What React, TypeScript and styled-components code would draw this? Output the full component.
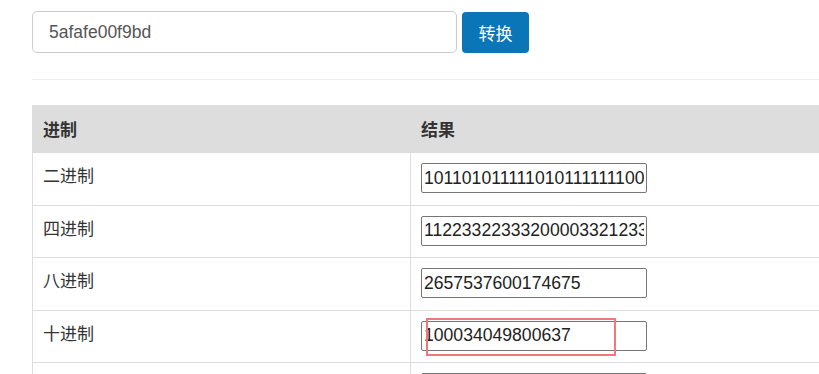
import React from "react";
import styled, { createGlobalStyle } from "styled-components";

const GlobalStyle = createGlobalStyle`
  html, body {
    margin: 0;
    padding: 0;
    background: #fff;
    overflow: hidden;
  }

  body {
    font-family: "Noto Sans CJK SC", "Liberation Sans", sans-serif;
    color: #333;
  }
`;

const Page = styled.div`
  padding: 11px 0 0 32px;
  width: 1200px;
`;

const Form = styled.form`
  display: flex;
  align-items: flex-start;
  gap: 5px;
`;

const SearchInput = styled.input`
  box-sizing: border-box;
  width: 425px;
  height: 42px;
  padding: 0 16px;
  border: 1px solid #ccc;
  border-radius: 5px;
  font-family: "Liberation Sans", Arial, sans-serif;
  font-size: 17.5px;
  color: #555;
  outline: none;
`;

const ConvertButton = styled.button`
  box-sizing: border-box;
  width: 67px;
  height: 41px;
  margin-top: 1px;
  border: none;
  border-radius: 4px;
  background: #0a75b7;
  color: #fff;
  font-family: "Noto Sans CJK SC", sans-serif;
  font-size: 17px;
  cursor: pointer;
`;

const Divider = styled.hr`
  margin: 26px 0 25px;
  border: 0;
  border-top: 1px solid #eee;
`;

const Table = styled.table`
  width: 1150px;
  border-collapse: collapse;
  font-size: 17px;
  line-height: 1.42857;
  color: #333;
`;

const NameCol = styled.col`
  width: 378px;
`;

const HeadCell = styled.th`
  padding: 11px 10px;
  text-align: left;
  font-weight: 700;
  background: #ddd;
  border: 1px solid #ddd;
`;

const Cell = styled.td`
  padding: 10px 10px 11.5px;
  vertical-align: top;
  border: 1px solid #ddd;
`;

const ValueBox = styled.div`
  position: relative;
  width: 226px;
`;

const ValueInput = styled.input`
  display: block;
  box-sizing: border-box;
  width: 226px;
  height: 30px;
  padding: 1px 2px;
  border: 1px solid #767676;
  border-radius: 2px;
  font-family: "Liberation Sans", Arial, sans-serif;
  font-size: 17.6px;
  color: #222;
  background: #fff;
  outline: none;
`;

const Highlight = styled.span`
  position: absolute;
  top: -3px;
  left: 5px;
  width: 190px;
  height: 38px;
  box-sizing: border-box;
  border: 2px solid #f07878;
  pointer-events: none;
`;

interface Row {
  name: string;
  value: string;
  marked?: boolean;
}

const rows: Row[] = [
  { name: "二进制", value: "101101011111010111111100000000001111100110111101" },
  { name: "四进制", value: "112233223332000033212331" },
  { name: "八进制", value: "2657537600174675" },
  { name: "十进制", value: "100034049800637", marked: true },
  { name: "十六进制", value: "5afafe00f9bd" },
];

export default function App() {
  return (
    <Page>
      <GlobalStyle />
      <Form onSubmit={(e) => e.preventDefault()}>
        <SearchInput defaultValue="5afafe00f9bd" />
        <ConvertButton type="submit">转换</ConvertButton>
      </Form>

      <Divider />

      <Table>
        <colgroup>
          <NameCol />
          <col />
        </colgroup>
        <thead>
          <tr>
            <HeadCell>进制</HeadCell>
            <HeadCell>结果</HeadCell>
          </tr>
        </thead>
        <tbody>
          {rows.map((row) => (
            <tr key={row.name}>
              <Cell>{row.name}</Cell>
              <Cell>
                <ValueBox>
                  <ValueInput readOnly value={row.value} />
                  {row.marked && <Highlight />}
                </ValueBox>
              </Cell>
            </tr>
          ))}
        </tbody>
      </Table>
    </Page>
  );
}
